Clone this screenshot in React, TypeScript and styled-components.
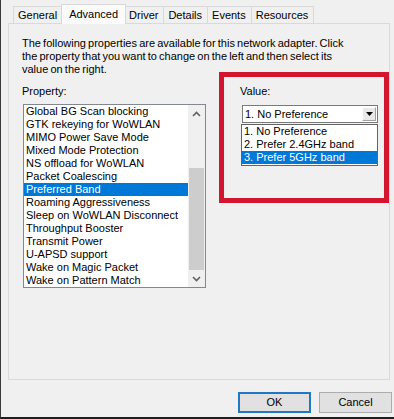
import styled, { createGlobalStyle } from 'styled-components';

const GlobalStyle = createGlobalStyle`
  html, body {
    margin: 0;
    padding: 0;
    background: #f0f0f0;
  }
  body {
    font-family: 'Liberation Sans', Arial, sans-serif;
    font-size: 11px;
    color: #000;
  }
`;

const Window = styled.div`
  width: 394px;
  height: 419px;
  box-sizing: border-box;
  border-left: 1px solid #3a3a3a;
  border-bottom: 2px solid #1e1e1e;
  display: flex;
  flex-direction: column;
  overflow: hidden;
`;

const TabStrip = styled.div`
  display: flex;
  align-items: flex-end;
  height: 23px;
  padding-left: 12px;
  position: relative;
  z-index: 1;
`;

const Tab = styled.div<{ $active?: boolean }>`
  box-sizing: border-box;
  height: ${(p) => (p.$active ? 20 : 17)}px;
  margin-bottom: ${(p) => (p.$active ? -1 : 0)}px;
  margin-left: ${(p) => (p.$active ? -2 : -1)}px;
  margin-right: ${(p) => (p.$active ? -1 : 0)}px;
  padding: ${(p) => (p.$active ? '2px 7px 0' : '1px 5px 0 4px')};
  border: 1px solid #d9d9d9;
  border-bottom: none;
  background: ${(p) => (p.$active ? '#fbfbfb' : '#f0f0f0')};
  line-height: 14px;
  position: relative;
  z-index: ${(p) => (p.$active ? 2 : 1)};
  &:first-child {
    margin-left: 0;
  }
`;

const Panel = styled.div`
  margin: 0 4px 0 7px;
  height: 357px;
  box-sizing: border-box;
  border: 1px solid #d9d9d9;
  background: #f0f0f0;
  padding: 13px 13px 0;
`;

const Intro = styled.p`
  margin: 0;
  line-height: 13px;
  width: 330px;
  word-spacing: -0.9px;
`;

const Columns = styled.div`
  display: flex;
  margin-top: 9px;
`;

const LeftColumn = styled.div`
  width: 184px;
  display: flex;
  flex-direction: column;
`;

const RightColumn = styled.div`
  margin-left: 34px;
  width: 140px;
  position: relative;
  display: flex;
  flex-direction: column;
`;

const Label = styled.div`
  line-height: 13px;
  height: 13px;
`;

const ListBox = styled.div`
  margin: 6px 0 0 1px;
  width: 183px;
  height: 184px;
  box-sizing: border-box;
  border: 1px solid #828790;
  background: #fff;
  display: flex;
`;

const Items = styled.div`
  flex: 1;
  display: flex;
  flex-direction: column;
`;

const Item = styled.div<{ $selected?: boolean }>`
  height: 13px;
  line-height: 13px;
  padding-left: 2px;
  white-space: nowrap;
  background: ${(p) => (p.$selected ? '#0078d7' : 'transparent')};
  color: ${(p) => (p.$selected ? '#fff' : '#000')};
`;

const ScrollBar = styled.div`
  width: 17px;
  background: #f0f0f0;
  display: flex;
  flex-direction: column;
`;

const ScrollArrow = styled.div`
  height: 17px;
  display: flex;
  align-items: center;
  justify-content: center;
`;

const Track = styled.div`
  flex: 1;
  display: flex;
  flex-direction: column;
`;

const Thumb = styled.div`
  margin: 46px 1px 0;
  height: 102px;
  background: #cdcdcd;
`;

const Combo = styled.div`
  margin: 7px 0 0 2px;
  width: 136px;
  height: 18px;
  box-sizing: border-box;
  border: 1px solid #7a7a7a;
  background: #fff;
  display: flex;
  align-items: center;
`;

const ComboText = styled.div`
  flex: 1;
  padding-left: 2px;
  line-height: 14px;
`;

const ComboButton = styled.div`
  width: 14px;
  height: 14px;
  margin-right: 1px;
  box-sizing: border-box;
  background: #e8e8e8;
  border: 1px solid #a0a0a0;
  border-top-color: #fff;
  border-left-color: #fff;
  display: flex;
  align-items: center;
  justify-content: center;
`;

const DropList = styled.div`
  margin: 1px 0 0 1px;
  width: 137px;
  box-sizing: border-box;
  border: 1px solid #646464;
  background: #fff;
  padding-bottom: 1px;
`;

const RedFrame = styled.div`
  position: absolute;
  left: -21px;
  top: -13px;
  width: 170px;
  height: 131px;
  box-sizing: border-box;
  border: 5px solid #d3162f;
  pointer-events: none;
`;

const Footer = styled.div`
  display: flex;
  justify-content: flex-end;
  gap: 8px;
  margin-top: 12px;
  padding-right: 2px;
`;

const Button = styled.button<{ $default?: boolean }>`
  all: unset;
  width: 73px;
  height: 21px;
  box-sizing: border-box;
  background: #e1e1e1;
  border: ${(p) => (p.$default ? '2px solid #1f78c1' : '1px solid #adadad')};
  text-align: center;
  line-height: ${(p) => (p.$default ? 17 : 19)}px;
  font-family: 'Liberation Sans', Arial, sans-serif;
  font-size: 11px;
  color: #000;
`;

const tabs = ['General', 'Advanced', 'Driver', 'Details', 'Events', 'Resources'];

const properties = [
  'Global BG Scan blocking',
  'GTK rekeying for WoWLAN',
  'MIMO Power Save Mode',
  'Mixed Mode Protection',
  'NS offload for WoWLAN',
  'Packet Coalescing',
  'Preferred Band',
  'Roaming Aggressiveness',
  'Sleep on WoWLAN Disconnect',
  'Throughput Booster',
  'Transmit Power',
  'U-APSD support',
  'Wake on Magic Packet',
  'Wake on Pattern Match',
];

const options = ['1. No Preference', '2. Prefer 2.4GHz band', '3. Prefer 5GHz band'];

const Chevron = ({ up }: { up?: boolean }) => (
  <svg width="9" height="6" viewBox="0 0 9 6">
    <polyline
      points={up ? '1,5 4.5,1.5 8,5' : '1,1 4.5,4.5 8,1'}
      fill="none"
      stroke="#606060"
      strokeWidth="1.6"
    />
  </svg>
);

const App = () => {
  return (
    <>
      <GlobalStyle />
      <Window>
        <TabStrip>
          {tabs.map((t) => (
            <Tab key={t} $active={t === 'Advanced'}>
              {t}
            </Tab>
          ))}
        </TabStrip>
        <Panel>
          <Intro>
            The following properties are available for this network adapter. Click the
            property that you want to change on the left and then select its value on
            the right.
          </Intro>
          <Columns>
            <LeftColumn>
              <Label>Property:</Label>
              <ListBox>
                <Items>
                  {properties.map((p) => (
                    <Item key={p} $selected={p === 'Preferred Band'}>
                      {p}
                    </Item>
                  ))}
                </Items>
                <ScrollBar>
                  <ScrollArrow>
                    <Chevron up />
                  </ScrollArrow>
                  <Track>
                    <Thumb />
                  </Track>
                  <ScrollArrow>
                    <Chevron />
                  </ScrollArrow>
                </ScrollBar>
              </ListBox>
            </LeftColumn>
            <RightColumn>
              <Label>Value:</Label>
              <Combo>
                <ComboText>1. No Preference</ComboText>
                <ComboButton>
                  <svg width="7" height="4" viewBox="0 0 7 4">
                    <polygon points="0,0 7,0 3.5,4" fill="#000" />
                  </svg>
                </ComboButton>
              </Combo>
              <DropList>
                {options.map((o, i) => (
                  <Item key={o} $selected={i === 2}>
                    {o}
                  </Item>
                ))}
              </DropList>
              <RedFrame />
            </RightColumn>
          </Columns>
        </Panel>
        <Footer>
          <Button $default>OK</Button>
          <Button>Cancel</Button>
        </Footer>
      </Window>
    </>
  );
};

export default App;
